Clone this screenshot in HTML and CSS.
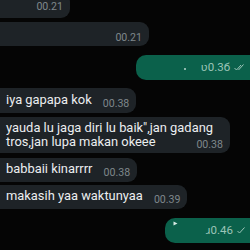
FILE: index.html
```html
<!DOCTYPE html>
<html lang="en">
<head>
	<meta charset="UTF-8">
	<title>chat</title>
	<link rel="stylesheet" href="styles.css">
</head>
<body>
	<div class="chat">
		<div class="msg in only-time first"><span class="time">00.21</span></div>
		<div class="msg in only-time second"><span class="time">00.21</span></div>
		<div class="msg out out-first">
			<span class="dot"></span>
			<span class="time">ʋ0.3б</span>
			<svg class="tick" width="11" height="7" viewBox="0 0 11 7"><path d="M0.5 4 L2.5 6 L7 1 M4.5 6 L9.5 0.5" fill="none" stroke="currentColor" stroke-width="1"/></svg>
		</div>
		<div class="msg in"><span class="text">iya gapapa kok</span><span class="time">00.38</span></div>
		<div class="msg in multi"><span class="text">yauda lu jaga diri lu baik",jan gadang<br>tros,jan lupa makan okeee</span><span class="time">00.38</span></div>
		<div class="msg in third"><span class="text">babbaii kinarrrr</span><span class="time">00.38</span></div>
		<div class="msg in fourth"><span class="text">makasih yaa waktunyaa</span><span class="time">00.39</span></div>
		<div class="msg out out-second">
			<svg class="mark" width="5" height="5" viewBox="0 0 5 5"><path d="M0.5 0.5 L4.5 2.5 L0.5 4.5 Z" fill="#d9ece6"/></svg>
			<span class="time">ɹ0.46</span>
			<svg class="tick" width="8" height="7" viewBox="0 0 8 7"><path d="M0.5 4 L2.5 6 L7.5 0.5" fill="none" stroke="currentColor" stroke-width="1"/></svg>
		</div>
		<div class="msg out out-third"></div>
	</div>
</body>
</html>
```

FILE: styles.css
```css
html,body{
	margin: 0;
	padding: 0;
	background: #050505;
	overflow: hidden;
}
.chat{
	width: 250px;
	height: 250px;
	display: flex;
	flex-direction: column;
	gap: 4px;
	margin-top: -7px;
	font-family: Roboto, "Noto Sans", sans-serif;
}
.msg{
	display: flex;
	align-items: flex-end;
	gap: 11px;
	height: 25px;
	padding: 5px 7px 6px 16px;
	margin-left: -10px;
	border-radius: 9px;
	box-sizing: border-box;
	flex-shrink: 0;
}
.in{
	align-self: flex-start;
	background: #1e2327;
}
.text{
	color: #eceef0;
	font-size: 12.9px;
	line-height: 14px;
	white-space: nowrap;
}
.time{
	color: #7e878b;
	font-size: 10.6px;
	line-height: 12px;
	margin-bottom: -3px;
	margin-left: auto;
}
.only-time .time{
	margin-bottom: 0;
}
.first{
	width: 80px;
	padding-bottom: 5px;
}
.second{
	width: 159px;
	height: 24px;
	padding-bottom: 2px;
}
.multi{
	height: 36px;
	display: grid;
	padding: 4px 7px 4px 16px;
}
.multi .text{
	grid-area: 1 / 1;
	padding-right: 10px;
}
.multi .time{
	grid-area: 1 / 1;
	justify-self: end;
	align-self: end;
	margin-bottom: -2px;
}
.third{
	height: 24px;
	margin-top: 1px;
}
.fourth{
	height: 24px;
	margin-top: -1px;
}
.out{
	align-self: flex-end;
	background: #0b614b;
	margin-left: 0;
	margin-right: -10px;
	padding: 5px 15px 7px 8px;
	gap: 3px;
	color: #9cc5b8;
	border-radius: 10px;
	margin-top: 5px;
	margin-bottom: 4px;
}
.out .time{
	color: #9cc5b8;
	font-size: 11.5px;
	margin-bottom: 0;
}
.out-first{
	width: 124px;
}
.out-first .dot{
	width: 2px;
	height: 2px;
	border-radius: 50%;
	background: #b9d6cc;
	margin-left: 40px;
	margin-bottom: 3px;
}
.tick{
	margin-bottom: 2px;
	margin-left: 1px;
}
.out-second{
	width: 95px;
	margin-top: 5px;
	margin-bottom: 1px;
}
.mark{
	margin-bottom: 10px;
}
.out-third{
	width: 230px;
	height: 20px;
	margin-top: 0;
	margin-bottom: 0;
}
```
